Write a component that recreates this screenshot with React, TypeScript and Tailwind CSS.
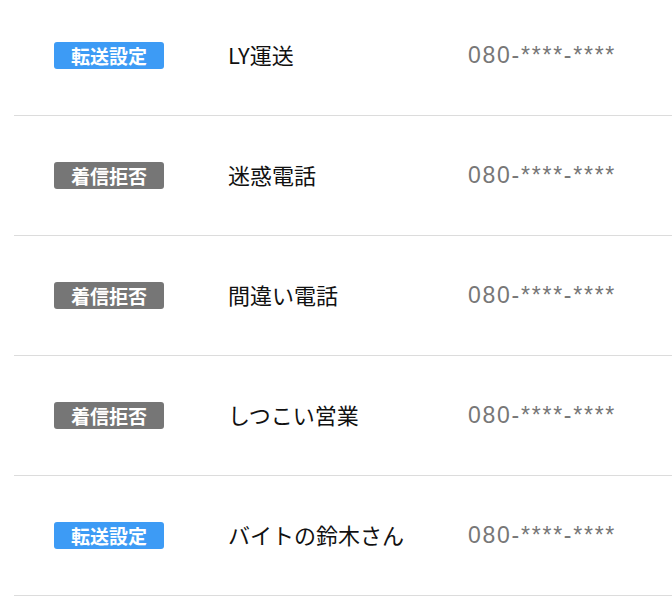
const rows = [
	{ tag: "転送設定", kind: "forward", name: "LY運送", phone: "080-****-****" },
	{ tag: "着信拒否", kind: "block", name: "迷惑電話", phone: "080-****-****" },
	{ tag: "着信拒否", kind: "block", name: "間違い電話", phone: "080-****-****" },
	{ tag: "着信拒否", kind: "block", name: "しつこい営業", phone: "080-****-****" },
	{ tag: "転送設定", kind: "forward", name: "バイトの鈴木さん", phone: "080-****-****" },
];

export default function App() {
	return (
		<div className="h-[596px] w-[672px] overflow-hidden bg-white font-['Noto_Sans_CJK_JP',sans-serif]">
			<ul className="-mt-1 pl-[14px]">
				{rows.map((row, i) => (
					<li
						key={i}
						className="flex h-[120px] items-center border-b-[1.5px] border-[#dcdcdc]"
					>
						<span
							className={
								row.kind === "forward"
									? "ml-10 flex h-[27px] w-[110px] items-center justify-center rounded-[3px] bg-[#3d9bf5] text-[19px] font-bold leading-none text-white"
									: "ml-10 flex h-[27px] w-[110px] items-center justify-center rounded-[3px] bg-[#767676] text-[19px] font-bold leading-none text-white"
							}
						>
							{row.tag}
						</span>
						<span className="mb-1 ml-16 w-[240px] text-[22px] leading-none text-[#111]">
							{row.name}
						</span>
						<span className="font-['Liberation_Sans',sans-serif] text-[23px] leading-none tracking-[1.75px] text-[#777]">
							{row.phone}
						</span>
					</li>
				))}
			</ul>
		</div>
	);
}
